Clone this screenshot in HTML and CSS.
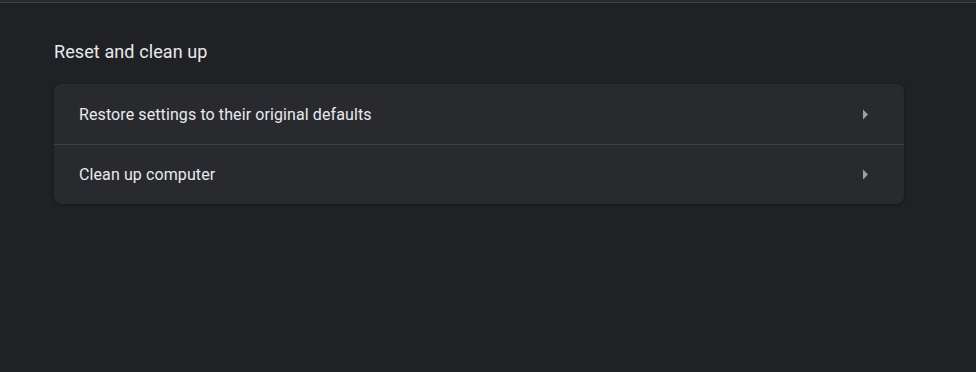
FILE: index.html
```html
<!DOCTYPE html>
<html>
<head>
<meta charset="utf-8">
<link rel="stylesheet" href="styles.css">
</head>
<body>
<div class="topbar"></div>
<main class="page">
  <h2 class="title">Reset and clean up</h2>
  <section class="card">
    <div class="row">
      <span class="label">Restore settings to their original defaults</span>
      <svg class="arrow" width="7" height="11" viewBox="0 0 7 11"><path d="M1 0.5 L6 5.5 L1 10.5 Z" fill="#9aa0a6"/></svg>
    </div>
    <div class="row">
      <span class="label">Clean up computer</span>
      <svg class="arrow" width="7" height="11" viewBox="0 0 7 11"><path d="M1 0.5 L6 5.5 L1 10.5 Z" fill="#9aa0a6"/></svg>
    </div>
  </section>
</main>
</body>
</html>
```

FILE: styles.css
```css
html, body {
  margin: 0;
  padding: 0;
  background: #202124;
  height: 100%;
}
body {
  font-family: Roboto, "Liberation Sans", sans-serif;
  color: #e8eaed;
}
.topbar {
  height: 2px;
  background: #28292c;
  border-bottom: 1px solid #3f4043;
}
.page {
  padding: 0 72px 0 54px;
}
.title {
  margin: 0;
  padding-top: 37px;
  font-size: 18px;
  font-weight: 400;
  line-height: 24px;
  height: 44px;
  letter-spacing: 0.1px;
}
.card {
  width: 850px;
  background: #292a2d;
  border-radius: 8px;
  box-shadow: 0 1px 3px rgba(0, 0, 0, 0.35);
}
.row {
  display: flex;
  align-items: center;
  justify-content: space-between;
  height: 60px;
  padding: 0 35px 0 25px;
  box-sizing: border-box;
  font-size: 16px;
  letter-spacing: 0.1px;
}
.row + .row {
  border-top: 1px solid #3f4043;
}
.arrow {
  display: block;
}
```
